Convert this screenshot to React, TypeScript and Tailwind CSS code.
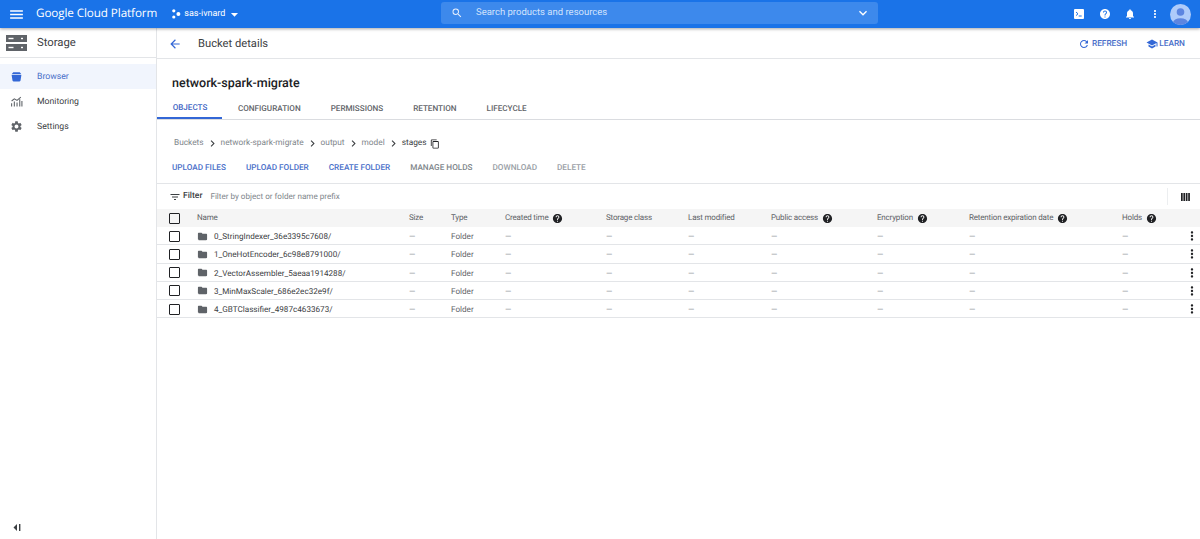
import React from "react";

const help = "M12 2C6.48 2 2 6.48 2 12s4.48 10 10 10 10-4.48 10-10S17.52 2 12 2zm1 17h-2v-2h2v2zm2.07-7.75l-.9.92C13.45 12.9 13 13.5 13 15h-2v-.5c0-1.1.45-2.1 1.17-2.83l1.24-1.26c.37-.36.59-.86.59-1.41 0-1.1-.9-2-2-2s-2 .9-2 2H8c0-2.21 1.79-4 4-4s4 1.79 4 4c0 .88-.36 1.68-.93 2.25z";

function Ic({ d, size, className }: { d: string; size: number; className?: string }) {
  return (
    <svg width={size} height={size} viewBox="0 0 24 24" fill="currentColor" className={"shrink-0 " + (className ?? "")}>
      <path d={d} />
    </svg>
  );
}

const Help = () => <Ic d={help} size={11} className="ml-[4px] text-[#202124]" />;

const Chevron = () => (
  <Ic d="M10 6L8.59 7.41 13.17 12l-4.58 4.59L10 18l6-6z" size={13} className="mx-[2px] text-[#3c4043]" />
);

const Check = () => <div className="h-[11px] w-[11px] rounded-[1px] border-[1.5px] border-[#202124]" />;

const rows = [
  "0_StringIndexer_36e3395c7608/",
  "1_OneHotEncoder_6c98e8791000/",
  "2_VectorAssembler_5aeaa1914288/",
  "3_MinMaxScaler_686e2ec32e9f/",
  "4_GBTClassifier_4987c4633673/",
];

const cols = "grid grid-cols-[40px_212px_42px_54px_101px_82px_83px_106px_92px_153px_62px_1fr] items-center";

function Dash() {
  return <span className="text-[#80868b]">—</span>;
}

export default function App() {
  return (
    <div className="flex h-[539px] w-[1200px] flex-col overflow-hidden bg-white font-['Roboto',sans-serif] text-[#3c4043] [text-rendering:geometricPrecision]">
      <header className="relative z-10 flex h-[28px] shrink-0 items-center bg-[#1a73e8] text-white shadow-[0_1px_3px_rgba(0,0,0,0.35)]">
        <Ic d="M3 18h18v-2H3v2zm0-5h18v-2H3v2zm0-7v2h18V6H3z" size={17} className="ml-[8px]" />
        <span className="ml-[11px] font-['Open_Sans',sans-serif] text-[11.7px] tracking-[-0.1px] whitespace-nowrap">Google Cloud Platform</span>
        <svg width="10" height="10" viewBox="0 0 10 10" fill="white" className="ml-[14px]">
          <circle cx="2.8" cy="1.8" r="1.6" />
          <circle cx="2.8" cy="8" r="1.6" />
          <circle cx="7.4" cy="5" r="2" />
        </svg>
        <span className="ml-[3px] pt-[1px] text-[9px] whitespace-nowrap">sas-ivnard</span>
        <Ic d="M7 10l5 5 5-5z" size={17} className="ml-[1px]" />
        <div className="absolute top-[2px] left-[441px] flex h-[22px] w-[437px] items-center rounded-[3px] bg-[#3d89ec] px-[10px]">
          <Ic d="M15.5 14h-.79l-.28-.27A6.47 6.47 0 0016 9.5 6.5 6.5 0 109.5 16c1.61 0 3.09-.59 4.23-1.57l.27.28v.79l5 4.99L20.49 19l-4.99-5zm-6 0C7.01 14 5 11.99 5 9.5S7.01 5 9.5 5 14 7.01 14 9.5 11.99 14 9.5 14z" size={12} className="text-[#e8f0fe]" />
          <span className="ml-[13px] pt-[1px] text-[9.5px] text-[#d2e3fc]">Search products and resources</span>
          <Ic d="M7.41 8.59L12 13.17l4.59-4.58L18 10l-6 6-6-6z" size={16} className="mr-[-3px] ml-auto" />
        </div>
        <div className="ml-auto flex items-center">
          <svg width="10" height="10" viewBox="0 0 10 10" className="mr-[15px]">
            <rect width="10" height="10" rx="1" fill="white" />
            <path d="M2 3l2 1.8L2 6.6M4.7 7h3" stroke="#1a73e8" strokeWidth="1" fill="none" />
          </svg>
          <Ic d={help} size={12} className="mr-[13px]" />
          <Ic d="M12 22c1.1 0 2-.9 2-2h-4c0 1.1.89 2 2 2zm6-6v-5c0-3.07-1.64-5.64-4.5-6.32V4c0-.83-.67-1.5-1.5-1.5s-1.5.67-1.5 1.5v.68C7.63 5.36 6 7.92 6 11v5l-2 2v1h16v-1l-2-2z" size={12} className="mr-[13px]" />
          <Ic d="M12 8c1.1 0 2-.9 2-2s-.9-2-2-2-2 .9-2 2 .9 2 2 2zm0 2c-1.1 0-2 .9-2 2s.9 2 2 2 2-.9 2-2-.9-2-2-2zm0 6c-1.1 0-2 .9-2 2s.9 2 2 2 2-.9 2-2-.9-2-2-2z" size={12} className="mr-[9px]" />
          <svg width="21" height="21" viewBox="0 0 21 21" className="mr-[9px]">
            <defs>
              <clipPath id="av"><circle cx="10.5" cy="10.5" r="10.5" /></clipPath>
            </defs>
            <g clipPath="url(#av)">
              <rect width="21" height="21" fill="#aecbfa" />
              <circle cx="10.5" cy="8" r="3.8" fill="#5c85e0" />
              <ellipse cx="10.5" cy="19" rx="7.5" ry="4.8" fill="#5c85e0" />
            </g>
          </svg>
        </div>
      </header>

      <div className="flex min-h-0 flex-1">
        <aside className="flex w-[157px] shrink-0 flex-col border-r border-[#e3e5e8]">
          <div className="flex h-[30px] shrink-0 items-center border-b border-[#e3e5e8] pt-[1px] pl-[6px]">
            <svg width="21" height="16" viewBox="0 0 21 16" fill="#5f6368">
              <rect width="21" height="7" />
              <rect y="9" width="21" height="7" />
              <rect x="2.5" y="2.8" width="5" height="1.4" fill="white" />
              <rect x="15" y="2.8" width="2" height="1.4" fill="white" />
              <rect x="2.5" y="11.8" width="5" height="1.4" fill="white" />
              <rect x="15" y="11.8" width="2" height="1.4" fill="white" />
            </svg>
            <span className="ml-[10px] pt-[1px] text-[11.3px] text-[#3c4043]">Storage</span>
          </div>
          <nav className="mt-[6px] flex flex-col text-[8.7px]">
            <div className="flex h-[25px] items-center bg-[#f1f5fd] pl-[10px] text-[#4a6fc9]">
              <svg width="13" height="13" viewBox="0 0 24 24" fill="#3367d6">
                <path d="M3 9h18l-1.5 10a2 2 0 01-2 2h-11a2 2 0 01-2-2L3 9zM6 4h12l3 4H3l3-4z" />
              </svg>
              <span className="ml-[14px] pt-[2px]">Browser</span>
            </div>
            <div className="flex h-[25px] items-center pl-[10px]">
              <svg width="13" height="13" viewBox="0 0 24 24" fill="none" stroke="#5f6368" strokeWidth="2">
                <path d="M3 21v-6M8 21v-9M13 21v-7M18 21V8M22 21V11M3 11l5-4 5 3 7-6" />
              </svg>
              <span className="ml-[14px] pt-[2px]">Monitoring</span>
            </div>
            <div className="flex h-[25px] items-center pl-[10px]">
              <Ic d="M19.14 12.94c.04-.3.06-.61.06-.94 0-.32-.02-.64-.07-.94l2.03-1.58a.49.49 0 00.12-.61l-1.92-3.32a.488.488 0 00-.59-.22l-2.39.96c-.5-.38-1.03-.7-1.62-.94l-.36-2.54a.484.484 0 00-.48-.41h-3.84c-.24 0-.43.17-.47.41l-.36 2.54c-.59.24-1.13.57-1.62.94l-2.39-.96c-.22-.08-.47 0-.59.22L2.74 8.87c-.12.21-.08.47.12.61l2.03 1.58c-.05.3-.09.63-.09.94s.02.64.07.94l-2.03 1.58a.49.49 0 00-.12.61l1.92 3.32c.12.22.37.29.59.22l2.39-.96c.5.38 1.03.7 1.62.94l.36 2.54c.05.24.24.41.48.41h3.84c.24 0 .44-.17.47-.41l.36-2.54c.59-.24 1.13-.56 1.62-.94l2.39.96c.22.08.47 0 .59-.22l1.92-3.32c.12-.22.07-.47-.12-.61l-2.01-1.58zM12 15.6c-1.98 0-3.6-1.62-3.6-3.6s1.62-3.6 3.6-3.6 3.6 1.62 3.6 3.6-1.62 3.6-3.6 3.6z" size={13} className="text-[#5f6368]" />
              <span className="ml-[14px] pt-[2px]">Settings</span>
            </div>
          </nav>
          <div className="mt-auto mb-[6px] pl-[11px]">
            <svg width="11" height="11" viewBox="0 0 11 11" fill="#3c4043">
              <path d="M6 2L2.5 5.5 6 9V2z" />
              <rect x="8" y="2" width="1.4" height="7" />
            </svg>
          </div>
        </aside>

        <main className="flex min-w-0 flex-1 flex-col">
          <div className="flex h-[31px] shrink-0 items-center border-b border-[#e3e5e8] pt-[1px]">
            <Ic d="M20 11H7.83l5.59-5.59L12 4l-8 8 8 8 1.41-1.41L7.83 13H20v-2z" size={14} className="ml-[11px] text-[#3367d6]" />
            <span className="ml-[16px] pt-[1px] text-[11.2px] text-[#3c4043]">Bucket details</span>
            <div className="ml-auto flex items-center text-[8.3px] font-medium text-[#4a6fc9]">
              <Ic d="M17.65 6.35A7.958 7.958 0 0012 4c-4.42 0-7.99 3.58-7.99 8s3.57 8 7.99 8c3.73 0 6.84-2.55 7.73-6h-2.08A5.99 5.99 0 0112 18c-3.31 0-6-2.69-6-6s2.69-6 6-6c1.66 0 3.14.69 4.22 1.78L13 11h7V4l-2.35 2.35z" size={12} className="text-[#3367d6]" />
              <span className="ml-[2px] pt-[1px]">REFRESH</span>
              <Ic d="M5 13.18v4L12 21l7-3.82v-4L12 17l-7-3.82zM12 3L1 9l11 6 9-4.91V17h2V9L12 3z" size={12} className="ml-[19px] text-[#3367d6]" />
              <span className="mr-[15px] ml-[1px] pt-[1px]">LEARN</span>
            </div>
          </div>

          <h1 className="mt-[16px] ml-[15px] text-[12.5px] leading-[18px] font-medium text-[#202124]">network-spark-migrate</h1>

          <div className="mt-[5px] flex h-[22px] shrink-0 items-stretch border-b border-[#dadce0] text-[8.1px] font-medium text-[#5f6368]">
            <div className="flex w-[65px] items-center justify-center border-b-2 border-[#3367d6] pl-[1px] text-[#3f66c4]">OBJECTS</div>
            <div className="ml-[16px] flex items-center">CONFIGURATION</div>
            <div className="ml-[30px] flex items-center">PERMISSIONS</div>
            <div className="ml-[30px] flex items-center">RETENTION</div>
            <div className="ml-[30px] flex items-center">LIFECYCLE</div>
          </div>

          <div className="mt-[16px] ml-[17px] flex h-[15px] items-center text-[8.3px] text-[#80868b]">
            <span>Buckets</span>
            <Chevron />
            <span>network-spark-migrate</span>
            <Chevron />
            <span>output</span>
            <Chevron />
            <span>model</span>
            <Chevron />
            <span className="text-[#3c4043]">stages</span>
            <Ic d="M16 1H4c-1.1 0-2 .9-2 2v14h2V3h12V1zm3 4H8c-1.1 0-2 .9-2 2v14c0 1.1.9 2 2 2h11c1.1 0 2-.9 2-2V7c0-1.1-.9-2-2-2zm0 16H8V7h11v14z" size={10} className="ml-[3px] text-[#202124]" />
          </div>

          <div className="mt-[10px] ml-[15px] flex h-[15px] items-center gap-[20px] text-[8.2px] font-medium text-[#4a6fc9]">
            <span>UPLOAD FILES</span>
            <span>UPLOAD FOLDER</span>
            <span>CREATE FOLDER</span>
            <span className="text-[#80868b]">MANAGE HOLDS</span>
            <span className="text-[#9aa0a6]">DOWNLOAD</span>
            <span className="text-[#9aa0a6]">DELETE</span>
          </div>

          <div className="mt-[7px] flex h-[26px] shrink-0 items-center border-t border-[#e3e5e8] pl-[12px]">
            <Ic d="M10 18h4v-2h-4v2zM3 6v2h18V6H3zm3 7h12v-2H6v2z" size={12} />
            <span className="ml-[2px] text-[8.5px] font-medium text-[#3c4043]">Filter</span>
            <span className="ml-[8px] text-[8.1px] text-[#80868b]">Filter by object or folder name prefix</span>
            <div className="ml-auto flex h-[17px] w-[33px] items-center justify-center border-l border-[#eceef0] pl-[2px]">
              <svg width="9" height="8" viewBox="0 0 9 8" fill="#202124">
                <rect width="1.7" height="8" />
                <rect x="2.4" width="1.7" height="8" />
                <rect x="4.8" width="1.7" height="8" />
                <rect x="7.2" width="1.7" height="8" />
              </svg>
            </div>
          </div>

          <div className={cols + " h-[18px] bg-[#f5f5f5] text-[8px] tracking-[-0.18px] text-[#5f6368]"}>
            <div className="pl-[12px]"><Check /></div>
            <div>Name</div>
            <div>Size</div>
            <div>Type</div>
            <div className="flex items-center">Created time<Help /></div>
            <div>Storage class</div>
            <div>Last modified</div>
            <div className="flex items-center">Public access<Help /></div>
            <div className="flex items-center">Encryption<Help /></div>
            <div className="flex items-center">Retention expiration date<Help /></div>
            <div className="flex items-center">Holds<Help /></div>
            <div />
          </div>

          {rows.map((name) => (
            <div key={name} className={cols + " h-[18.25px] border-b border-[#e3e5e8] pt-[1px] text-[8.15px] text-[#5f6368]"}>
              <div className="pl-[12px]"><Check /></div>
              <div className="flex items-center text-[#3c4043]">
                <Ic d="M10 4H4c-1.1 0-1.99.9-1.99 2L2 18c0 1.1.9 2 2 2h16c1.1 0 2-.9 2-2V8c0-1.1-.9-2-2-2h-8l-2-2z" size={11} className="text-[#5f6368]" />
                <span className="ml-[6px]">{name}</span>
              </div>
              <div><Dash /></div>
              <div>Folder</div>
              <div><Dash /></div>
              <div><Dash /></div>
              <div><Dash /></div>
              <div><Dash /></div>
              <div><Dash /></div>
              <div><Dash /></div>
              <div><Dash /></div>
              <div className="flex justify-end pr-[1px]">
                <Ic d="M12 8c1.1 0 2-.9 2-2s-.9-2-2-2-2 .9-2 2 .9 2 2 2zm0 2c-1.1 0-2 .9-2 2s.9 2 2 2 2-.9 2-2-.9-2-2-2zm0 6c-1.1 0-2 .9-2 2s.9 2 2 2 2-.9 2-2-.9-2-2-2z" size={14} className="text-[#202124]" />
              </div>
            </div>
          ))}
        </main>
      </div>
    </div>
  );
}
